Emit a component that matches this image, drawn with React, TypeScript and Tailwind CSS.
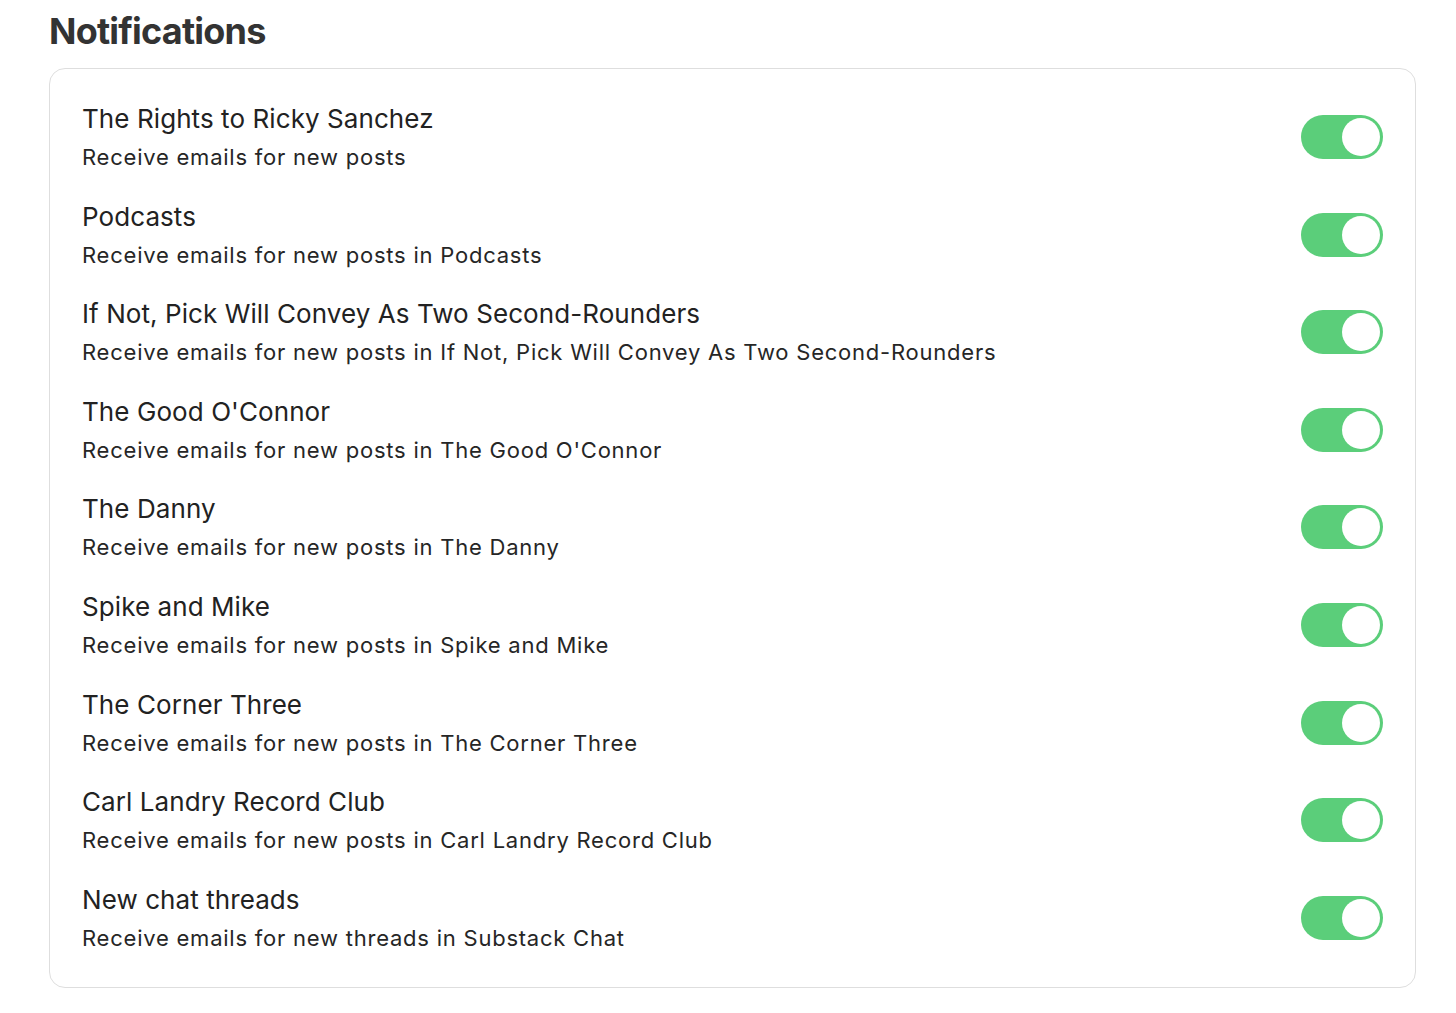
const items = [
  { title: "The Rights to Ricky Sanchez", desc: "Receive emails for new posts" },
  { title: "Podcasts", desc: "Receive emails for new posts in Podcasts" },
  {
    title: "If Not, Pick Will Convey As Two Second-Rounders",
    desc: "Receive emails for new posts in If Not, Pick Will Convey As Two Second-Rounders",
  },
  { title: "The Good O'Connor", desc: "Receive emails for new posts in The Good O'Connor" },
  { title: "The Danny", desc: "Receive emails for new posts in The Danny" },
  { title: "Spike and Mike", desc: "Receive emails for new posts in Spike and Mike" },
  { title: "The Corner Three", desc: "Receive emails for new posts in The Corner Three" },
  { title: "Carl Landry Record Club", desc: "Receive emails for new posts in Carl Landry Record Club" },
  { title: "New chat threads", desc: "Receive emails for new threads in Substack Chat" },
];

function Toggle() {
  return (
    <div className="flex h-[44px] w-[82px] shrink-0 items-center justify-end rounded-full bg-[#5bce7a] p-[3px]">
      <div className="h-[38px] w-[38px] rounded-full bg-white" />
    </div>
  );
}

export default function App() {
  return (
    <div className="min-h-screen bg-white pl-[49px] pr-[40px] pt-[11px] font-['Inter',sans-serif] text-[#222]">
      <h1 className="text-[36px] font-bold leading-[40px] tracking-[-0.022em] text-[#333]">Notifications</h1>
      <div className="mt-[17px] flex flex-col gap-[25.6px] rounded-[16px] border border-[#dedede] px-8 pb-[33px] pt-8">
        {items.map((item) => (
          <div key={item.title} className="flex items-center justify-between">
            <div className="flex flex-col">
              <div className="text-[26px] leading-[36px] tracking-[0.003em]">{item.title}</div>
              <div className="mt-1 text-[22px] leading-[32px] tracking-[0.035em] text-[#262626]">{item.desc}</div>
            </div>
            <div className="pl-4">
              <Toggle />
            </div>
          </div>
        ))}
      </div>
    </div>
  );
}
